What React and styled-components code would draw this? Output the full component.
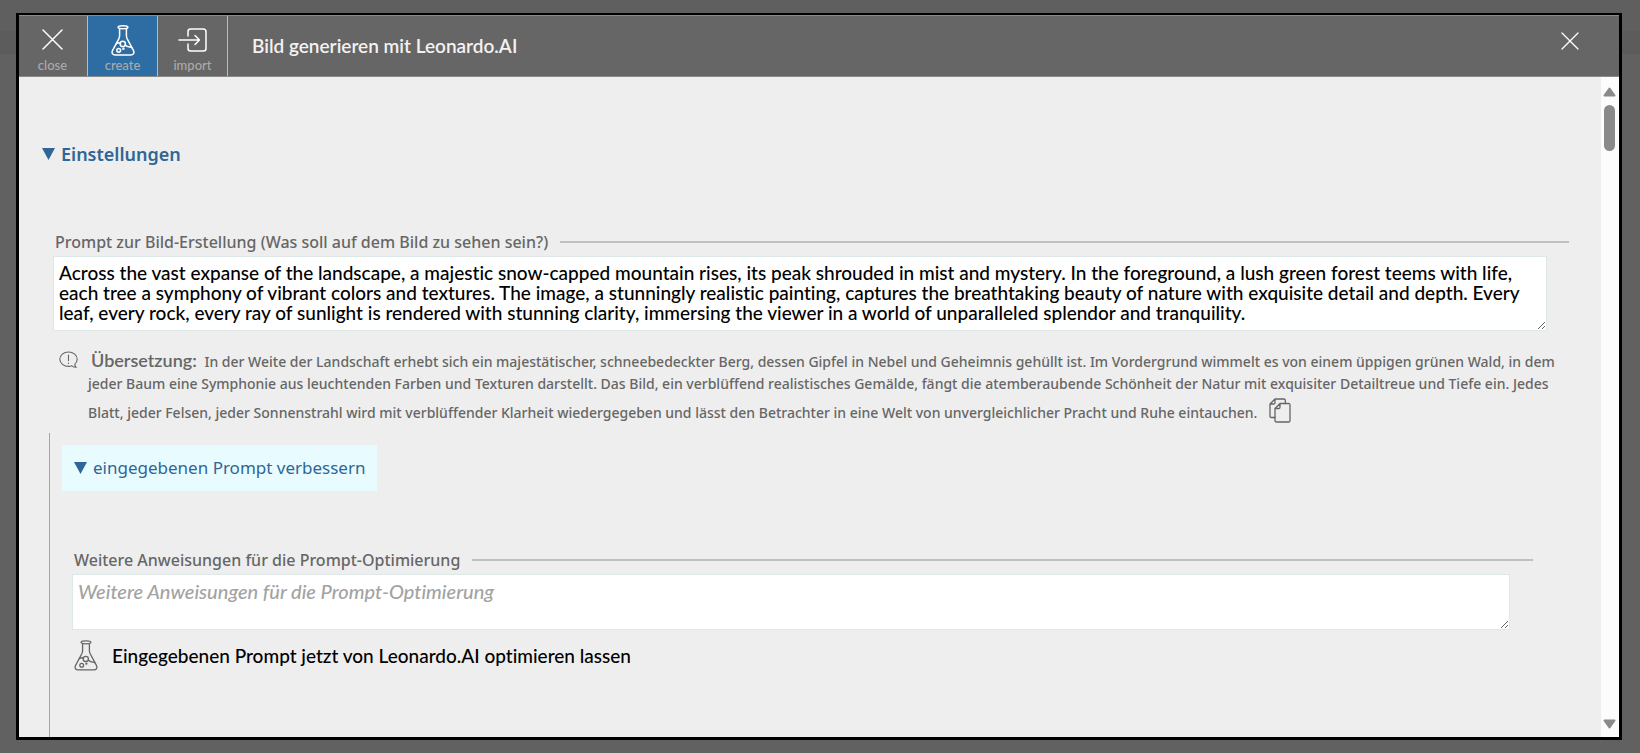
import React, { useState } from 'react';
import styled, { createGlobalStyle, css } from 'styled-components';

const HUMANIST = '"Noto Sans", "Open Sans", sans-serif';
const TEXT = 'Lato, "Open Sans", sans-serif';

const GlobalStyle = createGlobalStyle`
  *, *::before, *::after { box-sizing: border-box; }
  body {
    margin: 0;
    font-family: ${HUMANIST};
    font-weight: 500;
    font-variant-ligatures: none;
    color: #666;
    background: #606060;
  }
  button { font: inherit; font-variant-ligatures: none; border: 0; margin: 0; padding: 0; background: none; cursor: pointer; }
`;

const Backdrop = styled.div`
  height: 100vh;
  padding: 13px 18px 13px 16px;
  background: linear-gradient(#5f5f5f 31px, #5c5c5c 31px, #5c5c5c 54px, #616161 54px);
`;

const Dialog = styled.section`
  height: 100%;
  display: flex;
  flex-direction: column;
  border: solid #000;
  border-width: 2px 3px 3px;
  background: #eee;
  overflow: hidden;
`;

const Header = styled.header`
  flex: none;
  height: 62px;
  display: flex;
  align-items: stretch;
  background: #666;
  border-top: 1px solid #8a8a8a;
  border-bottom: 1px solid #8a8a8a;
`;

const Tools = styled.nav`
  display: flex;
  margin-left: -1px;
`;

const ToolButton = styled.button`
  width: 70px;
  display: flex;
  flex-direction: column;
  align-items: center;
  justify-content: flex-end;
  gap: 1px;
  padding-bottom: 3px;
  border-right: 1px solid #bbb;
  color: #aaa;
  font-family: ${TEXT};
  font-size: 13px;
  line-height: 16px;
  ${(p) => p.$active && css`background: #2e6da4;`}
`;

const Title = styled.h1`
  flex: 1;
  align-self: center;
  margin: 0;
  padding-left: 24px;
  color: #f2f2f2;
  font-family: ${TEXT};
  font-size: 19px;
  line-height: 24px;
  font-weight: 600;
`;

const CloseButton = styled.button`
  align-self: flex-start;
  margin: 16px 40px 0 0;
  line-height: 0;
`;

const Body = styled.div`
  flex: 1;
  min-height: 0;
  display: flex;
`;

const Content = styled.main`
  flex: 1;
  min-width: 0;
  overflow: hidden;
`;

const ScrollTrack = styled.div`
  flex: none;
  width: 18px;
  display: flex;
  flex-direction: column;
  align-items: center;
  padding: 10px 1px 8px 0;
  background: #fcfcfc;
`;

const ScrollThumb = styled.div`
  width: 11px;
  height: 46px;
  margin: 8px 0 auto;
  border-radius: 6px;
  background: #8a8a8a;
`;

const Section = styled.details`
  padding-top: 64px;
`;

const Summary = styled.summary`
  display: flex;
  align-items: center;
  gap: 6px;
  width: fit-content;
  list-style: none;
  cursor: pointer;
  color: #2f6697;
  line-height: 26px;
  ${(p) => p.$boxed
    ? css`padding: 10px 12px; margin-left: 12px; background: #e8fcff; font-size: 17px; font-weight: 400;`
    : css`margin-left: 23px; font-size: 18px; font-weight: 600;`}
`;

const Field = styled.div`
  margin: ${(p) => (p.$nested ? '57px 0 0 22px' : '63px 0 0 34px')};
`;

const FieldHead = styled.div`
  display: flex;
  align-items: center;
  gap: 12px;
  padding-left: 2px;
  margin-right: ${(p) => (p.$nested ? '68px' : '32px')};
  &::after { content: ''; flex: 1; height: 2px; background: #c0c0c0; }
`;

const Label = styled.label`
  font-size: 16px;
  line-height: 24px;
`;

const TextBox = styled.textarea`
  display: block;
  width: calc(100% - ${(p) => (p.$nested ? '91px' : '54px')});
  height: ${(p) => (p.$nested ? '56px' : '75px')};
  margin: 2px 0 0;
  padding: 6px 5px;
  border: 1px solid #dfe8e8;
  border-radius: 0;
  outline: none;
  overflow: hidden;
  resize: vertical;
  background: #fff;
  color: #000;
  font-family: ${TEXT};
  font-size: 19px;
  font-weight: 500;
  font-variant-ligatures: none;
  line-height: 20px;
  &::placeholder { color: #a3a3a3; font-size: 20px; font-style: italic; }
`;

const Translation = styled.div`
  display: flex;
  gap: 10px;
  margin: 18px 36px 0 40px;
  svg { flex: none; }
`;

const Note = styled.p`
  flex: 1;
  margin: 0;
  font-size: 14px;
  line-height: 22px;
`;

const NoteTitle = styled.strong`
  margin: 0 4px 0 3px;
  font-family: ${TEXT};
  font-size: 18px;
  font-weight: 600;
`;

const CopyButton = styled.button`
  margin-left: 12px;
  padding-top: 3px;
  color: #666;
  line-height: 0;
  vertical-align: -5px;
`;

const Improve = styled.div`
  margin: 9px 0 0 30px;
  padding: 12px 0 160px;
  border-left: 1px solid #a5a5a5;
`;

const Action = styled.button`
  display: flex;
  align-items: center;
  gap: 14px;
  margin: 10px 0 0 2px;
  color: #000;
  font-family: ${TEXT};
  font-size: 19px;
  line-height: 24px;
  svg { color: #666; }
`;

const stroke = { fill: 'none', stroke: 'currentColor', strokeLinecap: 'round', strokeLinejoin: 'round', 'aria-hidden': true };

const Cross = ({ size, height = size, weight }) => (
  <svg width={size} height={height} viewBox={`0 ${(size - height) / 2} ${size} ${height}`} {...stroke} stroke="#fff" strokeWidth={weight}>
    <path d={`M1 1L${size - 1} ${size - 1}M${size - 1} 1L1 ${size - 1}`} />
  </svg>
);

const Flask = ({ color = 'currentColor', weight = 1.5 }) => (
  <svg width="24" height="31" viewBox="0 0 24 31" {...stroke} stroke={color} strokeWidth={weight}>
    <ellipse cx="12" cy="2.3" rx="4.9" ry="1.5" />
    <path d="M8.6 3.6v7.2c0 1.2-.3 2-.8 3L1.6 25.4c-1.3 2.7 0 4.5 2.6 4.5h15.6c2.6 0 3.9-1.8 2.6-4.5L16.2 13.8c-.5-1-.8-1.8-.8-3V3.6" />
    <path d="M5.4 18.6c1.500-1.200 2.700-1.200 4 0M14.300 20c1.700 2.200 3.900 1.800 6.500 2.500" />
    <circle cx="11.8" cy="18.9" r="2.6" />
    <circle cx="7.7" cy="25.3" r="1.9" />
    <circle cx="12.4" cy="23.7" r=".5" />
  </svg>
);

const ImportIcon = () => (
  <svg width="30" height="28" viewBox="0 0 30 28" {...stroke} stroke="#fff" strokeWidth="1.5">
    <path d="M10 8V3.500A2.500 2.500 0 0 1 12.500 1h13A2.500 2.500 0 0 1 28 3.500v17a2.500 2.500 0 0 1-2.500 2.500h-13a2.500 2.500 0 0 1-2.500-2.500V16" />
    <path d="M1 12h20.500M17 7.500l4.500 4.500-4.500 4.500" />
  </svg>
);

const SpeechIcon = () => (
  <svg width="19" height="20" viewBox="0 -2 19 20" {...stroke} strokeWidth="1.1">
    <path d="M17.300 16.300c-1.600.1-3.200-.5-4.400-1.500-1 .4-2.200.6-3.400.6C4.800 15.400 1 12.300.800 8.300.800 4.200 4.700 1 9.500 1s8.700 3.200 8.700 7.200c0 2-1 3.800-2.500 5.100.2 1.200.8 2.200 1.600 3z" />
    <path d="M9.500 4v5.800M9.500 12v.5" />
  </svg>
);

const CopyIcon = () => (
  <svg width="22" height="25" viewBox="0 0 22 25" {...stroke} strokeWidth="1.3">
    <path d="M6 19.500H2.300A1.300 1.300 0 0 1 1 18.200V6l5-5h9a1.300 1.300 0 0 1 1.300 1.300v3.200M1 6h3.700A1.300 1.300 0 0 0 6 4.700V1" />
    <path d="M11 5.500h8.700A1.300 1.300 0 0 1 21 6.800v15.900a1.300 1.300 0 0 1-1.300 1.300H7.300A1.300 1.300 0 0 1 6 22.700V10.500zM6 10.500h3.700A1.300 1.300 0 0 0 11 9.200V5.500" />
  </svg>
);

const Triangle = () => (
  <svg width="13" height="12" viewBox="0 0 13 12" fill="currentColor" aria-hidden="true">
    <path d="M0 0h13L6.500 12z" />
  </svg>
);

const ScrollArrow = ({ down }) => (
  <svg width="13" height="10" viewBox="0 0 13 10" fill="#8a8a8a" stroke="#8a8a8a" strokeWidth="2" strokeLinejoin="round" aria-hidden="true">
    <path d={down ? 'M1.500 1.500h10L6.500 8.500z' : 'M1.500 8.500h10L6.500 1.500z'} />
  </svg>
);

const PROMPT = 'Across the vast expanse of the landscape, a majestic snow-capped mountain rises, its peak shrouded in mist and mystery. In the foreground, a lush green forest teems with life, each tree a symphony of vibrant colors and textures. The image, a stunningly realistic painting, captures the breathtaking beauty of nature with exquisite detail and depth. Every leaf, every rock, every ray of sunlight is rendered with stunning clarity, immersing the viewer in a world of unparalleled splendor and tranquility.';

export default function App() {
  const [prompt, setPrompt] = useState(PROMPT);
  return (
    <>
      <GlobalStyle />
      <Backdrop>
        <Dialog role="dialog" aria-labelledby="dialog-title">
          <Header>
            <Tools>
              <ToolButton type="button"><Cross size={21} height={33} weight={1.5} />close</ToolButton>
              <ToolButton type="button" $active><Flask color="#fff" />create</ToolButton>
              <ToolButton type="button"><ImportIcon />import</ToolButton>
            </Tools>
            <Title id="dialog-title">Bild generieren mit Leonardo.AI</Title>
            <CloseButton type="button" aria-label="Schließen"><Cross size={18} weight={1.3} /></CloseButton>
          </Header>
          <Body>
            <Content>
              <Section open>
                <Summary><Triangle />Einstellungen</Summary>
                <Field>
                  <FieldHead>
                    <Label htmlFor="prompt">Prompt zur Bild-Erstellung (Was soll auf dem Bild zu sehen sein?)</Label>
                  </FieldHead>
                  <TextBox id="prompt" spellCheck={false} value={prompt} onChange={(e) => setPrompt(e.target.value)} />
                </Field>
                <Translation>
                  <SpeechIcon />
                  <Note>
                    <NoteTitle>Übersetzung:</NoteTitle> In der Weite der Landschaft erhebt sich ein majestätischer, schneebedeckter Berg, dessen Gipfel in Nebel und Geheimnis gehüllt ist. Im Vordergrund wimmelt es von einem üppigen grünen Wald, in dem jeder Baum eine Symphonie aus leuchtenden Farben und Texturen darstellt. Das Bild, ein verblüffend realistisches Gemälde, fängt die atemberaubende Schönheit der Natur mit exquisiter Detailtreue und Tiefe ein. Jedes Blatt, jeder Felsen, jeder Sonnenstrahl wird mit verblüffender Klarheit wiedergegeben und lässt den Betrachter in eine Welt von unvergleichlicher Pracht und Ruhe eintauchen.
                    <CopyButton type="button" aria-label="Kopieren"><CopyIcon /></CopyButton>
                  </Note>
                </Translation>
                <Improve>
                  <details open>
                    <Summary $boxed><Triangle />eingegebenen Prompt verbessern</Summary>
                    <Field $nested>
                      <FieldHead $nested>
                        <Label htmlFor="instructions">Weitere Anweisungen für die Prompt-Optimierung</Label>
                      </FieldHead>
                      <TextBox id="instructions" $nested placeholder="Weitere Anweisungen für die Prompt-Optimierung" />
                      <Action type="button"><Flask weight={1.3} />Eingegebenen Prompt jetzt von Leonardo.AI optimieren lassen</Action>
                    </Field>
                  </details>
                </Improve>
              </Section>
            </Content>
            <ScrollTrack aria-hidden="true">
              <ScrollArrow />
              <ScrollThumb />
              <ScrollArrow down />
            </ScrollTrack>
          </Body>
        </Dialog>
      </Backdrop>
    </>
  );
}
